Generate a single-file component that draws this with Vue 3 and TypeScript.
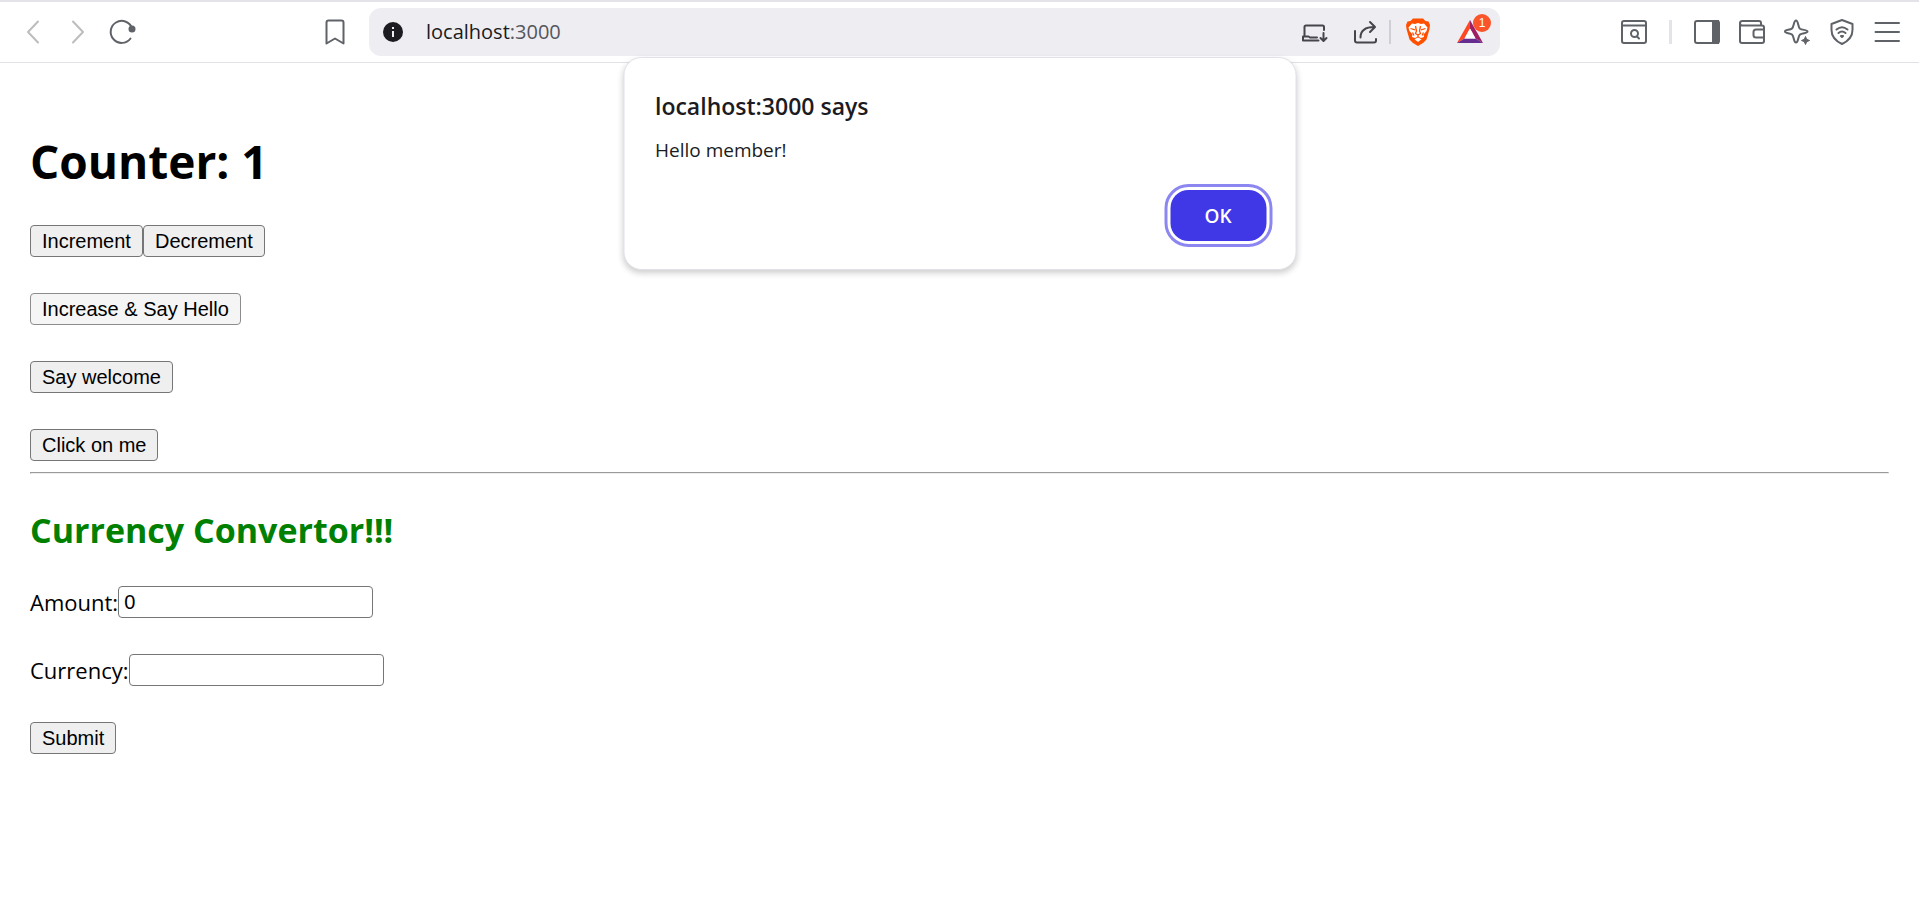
<script setup lang="ts">
import { ref } from 'vue'

const counter = ref(1)
const amount = ref('0')
const currency = ref('')
const dialogOpen = ref(true)
</script>

<template>
  <div class="window">
    <header class="toolbar">
      <nav class="nav" aria-label="Navigation">
        <button class="icon-btn" type="button" aria-label="Back">
          <svg width="28" height="28" viewBox="0 0 28 28" fill="none" stroke="#bdbdc0" stroke-width="2" stroke-linecap="round" stroke-linejoin="round"><path d="M18 3.500 L8 14 L18 24.500" /></svg>
        </button>
        <button class="icon-btn" type="button" aria-label="Forward">
          <svg width="28" height="28" viewBox="0 0 28 28" fill="none" stroke="#bdbdc0" stroke-width="2" stroke-linecap="round" stroke-linejoin="round"><path d="M9 3.500 L19 14 L9 24.500" /></svg>
        </button>
        <button class="icon-btn" type="button" aria-label="Reload">
          <svg width="28" height="28" viewBox="0 0 28 28" fill="none" stroke="#5f6368" stroke-width="2" stroke-linecap="round"><path d="M22.500 20.500 A11 11 0 1 1 24 10" /><circle cx="24" cy="11" r="3.500" fill="#5f6368" stroke="none" /></svg>
        </button>
      </nav>
      <button class="icon-btn bookmark" type="button" aria-label="Bookmark">
        <svg width="28" height="28" viewBox="0 0 28 28" fill="none" stroke="#5f6368" stroke-width="2" stroke-linejoin="round"><path d="M5.500 4.500 Q5.500 2.500 7.500 2.500 H20.500 Q22.500 2.500 22.500 4.500 V25.500 L14 20.500 L5.500 25.500 Z" /></svg>
      </button>
      <div class="address">
        <svg class="info" width="20" height="20" viewBox="0 0 20 20" aria-hidden="true"><circle cx="10" cy="10" r="10" fill="#1b1b21" /><rect x="9" y="9" width="2" height="6" fill="#eeedf2" /><rect x="9" y="5" width="2" height="2" fill="#eeedf2" /></svg>
        <span class="url">localhost<span class="port">:3000</span></span>
        <button class="icon-btn" type="button" aria-label="Install">
          <svg width="28" height="28" viewBox="0 0 28 28" fill="none" stroke="#45454b" stroke-width="2" stroke-linecap="round" stroke-linejoin="round"><path d="M24 12 V9 Q24 7.500 22.500 7.500 H6 Q4.500 7.500 4.500 9 V18.500 M18.500 22.500 H3 V18.500 H8.500 L10 19.500 H17 M23.500 15 V22.500 M20.500 20 L23.500 23 L26.500 20" /></svg>
        </button>
        <button class="icon-btn share" type="button" aria-label="Share">
          <svg width="28" height="28" viewBox="0 0 28 28" fill="none" stroke="#45454b" stroke-width="2" stroke-linecap="round" stroke-linejoin="round"><path d="M3 13 V22.500 Q3 24.500 5 24.500 H22 Q24 24.500 24 22.500 V21 M8.500 19.500 C8.500 12 14 9 22.500 9 M18 4 L23 9 L18 14" /></svg>
        </button>
        <span class="divider"></span>
        <button class="icon-btn lion" type="button" aria-label="Shields">
          <svg width="28" height="28" viewBox="0 0 28 28">
            <path fill="#ff5000" d="M9 0.500 H19 L21.500 3 L24.500 3.500 L26 7 L25.500 11 L22.500 21.500 L19 25 L14 28 L9 25 L5.500 21.500 L2.500 11 L2 7 L3.500 3.500 L6.500 3 Z" />
            <path fill="#fff" d="M8 5.500 L11 6 L14 5 L17 6 L20 5.500 L23.500 9.500 L22.500 13 L19.500 16.500 L20 19 L17 20 L14 18.500 L11 20 L8 19 L8.500 16.500 L5.500 13 L4.500 9.500 Z" />
            <path fill="#fff" d="M14 19.500 L17.500 21.200 L14 24 L10.500 21.200 Z" />
            <path fill="none" stroke="#ff5000" stroke-width="1.300" d="M6.500 10.500 L11 11.800 M21.500 10.500 L17 11.800 M11.500 8 L12.500 13 L11.500 15.500 L14 17 L16.500 15.500 L15.500 13 L16.500 8 M8.500 14.500 L10 17.500 M19.500 14.500 L18 17.500 M14 17 V19" />
          </svg>
        </button>
        <button class="icon-btn bat" type="button" aria-label="Rewards, 1 new">
          <svg width="28" height="28" viewBox="0 0 28 28"><path fill="#ff4724" d="M14 2 L1 25 L8.500 20.500 L14 10.500 Z" /><path fill="#9e1f63" d="M14 2 L27 25 L19.500 20.500 L14 10.500 Z" /><path fill="#662d91" d="M1 25 L8.500 20.500 H19.500 L27 25 Z" /><path fill="#fff" d="M14 10.500 L19.500 20.500 H8.500 Z" /></svg>
          <span class="badge">1</span>
        </button>
      </div>
      <div class="tools">
        <button class="icon-btn" type="button" aria-label="Search tabs">
          <svg width="28" height="28" viewBox="0 0 28 28" fill="none" stroke="#5f6368" stroke-width="2" stroke-linecap="round"><rect x="2" y="3" width="24" height="22" rx="2" /><path d="M2 7.500 H26 M17 18.500 L19 20.500" /><circle cx="14.500" cy="15.500" r="3.500" /></svg>
        </button>
        <span class="divider tool-divider"></span>
        <button class="icon-btn" type="button" aria-label="Sidebar">
          <svg width="28" height="28" viewBox="0 0 28 28" fill="none" stroke="#5f6368" stroke-width="2"><rect x="2" y="3" width="24" height="22" rx="2" /><path fill="#5f6368" d="M20 3 H25 V25 H20 Z" /></svg>
        </button>
        <button class="icon-btn" type="button" aria-label="Wallet">
          <svg width="28" height="28" viewBox="0 0 28 28" fill="none" stroke="#5f6368" stroke-width="2" stroke-linejoin="round"><path d="M23 7.500 V5 Q23 3 21 3 H4.500 Q2 3 2 5.200 Q2 7.500 4.500 7.500 H24 Q26 7.500 26 9.500 V23 Q26 25 24 25 H4 Q2 25 2 23 V5 M26 11.500 H18 Q15.500 11.500 15.500 14 V17 Q15.500 19.500 18 19.500 H26" /></svg>
        </button>
        <button class="icon-btn" type="button" aria-label="Assistant">
          <svg width="28" height="28" viewBox="0 0 28 28" fill="none" stroke="#5f6368" stroke-width="2" stroke-linejoin="round"><path d="M13 2.500 C15.500 2.500 14.800 9 17 10.800 C19 12.300 24.500 11.500 24.500 13.500 C24.500 15.500 19 14.700 17 16.500 C14.800 18.500 15.500 24.500 13 24.500 C10.500 24.500 11.200 18.500 9 16.500 C7 14.700 2 15.500 2 13.500 C2 11.500 7 12.300 9 10.500 C11.200 8.500 10.500 2.500 13 2.500 Z" /><path fill="#5f6368" stroke-width="1" d="M22.500 18.500 L23.700 21.300 L26.500 22.500 L23.700 23.700 L22.500 26.500 L21.300 23.700 L18.500 22.500 L21.300 21.300 Z" /></svg>
        </button>
        <button class="icon-btn" type="button" aria-label="VPN">
          <svg width="28" height="28" viewBox="0 0 28 28" fill="none" stroke="#5f6368" stroke-width="2" stroke-linecap="round" stroke-linejoin="round"><path d="M14 2 L24.500 6 V12 Q24.500 21 14 26 Q3.500 21 3.500 12 V6 Z M8.500 11.500 Q14 7 19.500 11.500 M10.500 15 Q14 12 17.500 15" /><path fill="#5f6368" d="M13 18 H15 L14 19 Z" /></svg>
        </button>
        <button class="icon-btn" type="button" aria-label="Menu">
          <svg width="28" height="28" viewBox="0 0 28 28" stroke="#5f6368" stroke-width="2" stroke-linecap="round"><path d="M2.500 5 H26 M2.500 14 H26 M2.500 23 H26" /></svg>
        </button>
      </div>
    </header>

    <main class="page">
      <h1>Counter: {{ counter }}</h1>
      <div class="row">
        <button class="native" type="button" @click="counter++">Increment</button><button class="native" type="button" @click="counter--">Decrement</button>
      </div>
      <div class="row">
        <button class="native hovered" type="button" @click="counter++; dialogOpen = true">Increase &amp; Say Hello</button>
      </div>
      <div class="row"><button class="native" type="button">Say welcome</button></div>
      <div class="row last"><button class="native" type="button">Click on me</button></div>
      <hr />
      <h2>Currency Convertor!!!</h2>
      <form @submit.prevent>
        <div class="row"><label for="amount">Amount:</label><input id="amount" v-model="amount" type="text" /></div>
        <div class="row"><label for="currency">Currency:</label><input id="currency" v-model="currency" type="text" /></div>
        <div class="row"><button class="native" type="submit">Submit</button></div>
      </form>
    </main>

    <section v-if="dialogOpen" class="dialog" role="alertdialog" aria-labelledby="dialog-title" aria-describedby="dialog-text">
      <div id="dialog-title" class="dialog-title">localhost:3000 says</div>
      <p id="dialog-text" class="dialog-text">Hello member!</p>
      <button class="ok" type="button" @click="dialogOpen = false">OK</button>
    </section>
  </div>
</template>

<style>
body {
  margin: 0;
  background: #fff;
}
</style>

<style scoped>
.window {
  position: relative;
  font-family: "Open Sans", "Noto Sans", sans-serif;
  color: #000;
}
.toolbar {
  box-sizing: border-box;
  height: 63px;
  display: flex;
  align-items: center;
  padding: 0 18px 0 20px;
  border-top: 2px solid #e4e3e9;
  border-bottom: 1px solid #e2e2e6;
}
.icon-btn {
  position: relative;
  flex: none;
  display: flex;
  padding: 0;
  border: 0;
  background: none;
}
.icon-btn svg {
  display: block;
}
.nav {
  display: flex;
  gap: 16px;
}
.bookmark {
  margin-left: 185px;
}
.address {
  box-sizing: border-box;
  flex: 1;
  height: 48px;
  display: flex;
  align-items: center;
  margin-left: 20px;
  padding: 0 16px 0 14px;
  border-radius: 12px;
  background: #eeedf2;
}
.info {
  flex: none;
}
.url {
  flex: 1;
  margin-left: 23px;
  font-size: 20px;
  line-height: 28px;
  color: #1b1b21;
}
.port {
  color: #55555c;
}
.share {
  margin-left: 24px;
}
.divider {
  flex: none;
  width: 2px;
  height: 24px;
  margin-left: 9px;
  background: #d0cfd6;
}
.lion {
  margin-left: 13px;
}
.bat {
  margin-left: 24px;
}
.badge {
  position: absolute;
  top: -4px;
  left: 17px;
  width: 18px;
  height: 18px;
  border-radius: 9px;
  background: #fb542b;
  color: #fff;
  font-size: 12px;
  line-height: 18px;
  text-align: center;
}
.tools {
  display: flex;
  align-items: center;
  gap: 17px;
  margin-left: 120px;
}
.tool-divider {
  width: 3px;
  margin: 0 4px;
  background: #e4e3e9;
}
.page {
  padding: 0 30px;
  font-size: 22px;
}
h1 {
  margin: 66px 0 32px;
  font-size: 46px;
  line-height: 64px;
  font-weight: 700;
}
h2 {
  margin: 32px 0;
  font-size: 34px;
  line-height: 48px;
  font-weight: 700;
  color: green;
}
.row {
  display: flex;
  align-items: center;
  height: 32px;
  margin-bottom: 36px;
}
.row.last {
  margin-bottom: 11px;
}
.native,
input {
  box-sizing: border-box;
  height: 32px;
  border: 1px solid #767676;
  border-radius: 4px;
  font: 20px/24px "Liberation Sans", Arial, sans-serif;
  color: #000;
}
.native {
  padding: 0 11px;
  background: #efefef;
}
.hovered {
  background: #f5f5f5;
  border-color: #8d8d8d;
}
input {
  width: 255px;
  padding: 0 5px;
  background: #fff;
}
hr {
  margin: 0;
  border: 1px solid #eee;
  border-top-color: #9a9a9a;
  border-left-color: #9a9a9a;
}
.dialog {
  position: absolute;
  top: 57px;
  left: 50%;
  box-sizing: border-box;
  width: 673px;
  transform: translateX(-50%);
  display: flex;
  flex-direction: column;
  padding: 31px 29px 28px 31px;
  border: 1px solid #e2e1e9;
  border-radius: 18px;
  background: #fff;
  box-shadow: 0 3px 6px rgba(0, 0, 0, 0.2);
  color: #1b1b21;
}
.dialog-title {
  font-size: 23px;
  line-height: 34px;
  font-weight: 600;
}
.dialog-text {
  margin: 14px 0 27px;
  font-size: 19px;
  line-height: 26px;
}
.ok {
  align-self: flex-end;
  width: 96px;
  height: 51px;
  border: 0;
  border-radius: 18px;
  background: #4038e6;
  color: #fff;
  font: 600 19px/26px "Open Sans", sans-serif;
  outline: 3px solid #8c87f0;
  outline-offset: 3px;
}
</style>
